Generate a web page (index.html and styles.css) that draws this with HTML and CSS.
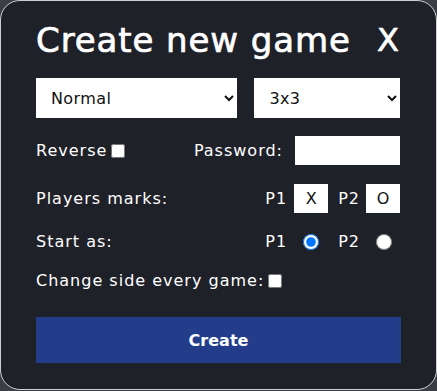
FILE: index.html
```html
<!DOCTYPE html>
<html lang="en">
<head>
	<meta charset="utf-8">
	<title>Create new game</title>
	<link rel="stylesheet" href="styles.css">
</head>
<body>
	<div class="modal">
		<div class="head">
			<h1>Create new game</h1>
			<span class="close">X</span>
		</div>
		<div class="row selects">
			<select class="mode">
				<option>Normal</option>
				<option>Reverse</option>
			</select>
			<select class="size">
				<option>3x3</option>
				<option>4x4</option>
				<option>5x5</option>
			</select>
		</div>
		<div class="row r2">
			<label class="rev">Reverse<input type="checkbox" class="chk"></label>
			<label class="pass">Password:<input type="text" class="pwd"></label>
		</div>
		<div class="row r3">
			<span>Players marks:</span>
			<div class="right">
				<span>P1</span><input type="text" class="mark" value="X" maxlength="1">
				<span>P2</span><input type="text" class="mark" value="O" maxlength="1">
			</div>
		</div>
		<div class="row r4">
			<span>Start as:</span>
			<div class="right">
				<span>P1</span><input type="radio" name="start" class="rad" checked>
				<span>P2</span><input type="radio" name="start" class="rad">
			</div>
		</div>
		<div class="row r5">
			<label class="rev">Change side every game:<input type="checkbox" class="chk"></label>
		</div>
		<button class="create">Create</button>
	</div>
</body>
</html>
```

FILE: styles.css
```css
*{ margin:0; padding:0; box-sizing:border-box; }
body{ background:#3b3e45; font-family:"DejaVu Sans","Noto Sans",sans-serif; color:#fff; }
.modal{ width:437px; height:390px; background:#1f2129; border:1px solid #cfcfcf; border-radius:20px; padding:17px 36px 0 35px; }

.head{ display:flex; justify-content:space-between; align-items:center; height:44px; }
.head h1{ font-size:34px; font-weight:400; letter-spacing:0.9px; -webkit-text-stroke:0.7px #fff; }
.close{ font-size:32px; font-weight:400; margin-right:1px; -webkit-text-stroke:0.7px #fff; }

.row{ display:flex; align-items:center; font-size:16px; letter-spacing:1px; }
.selects{ margin-top:16px; gap:17px; letter-spacing:0.4px; }
.selects select{ height:40px; border:none; border-radius:0; background:#fff; font-size:16px; font-family:inherit; letter-spacing:inherit; padding:0 8px 0 11px; color:#111; }
.selects .mode{ width:202px; }
.selects .size{ width:146px; }

.r2{ margin-top:18px; height:29px; }
.rev{ display:flex; align-items:center; }
.chk{ margin-left:4px; width:14px; height:14px; }
.pass{ display:flex; align-items:center; margin-left:auto; gap:12px; }
.pwd{ width:105px; height:29px; border:none; background:#fff; }

.r3, .r4{ justify-content:space-between; height:29px; }
.r3{ margin-top:19px; }
.r4{ margin-top:14px; }
.right{ display:flex; align-items:center; }
.mark{ width:34px; height:29px; border:none; background:#fff; text-align:center; font-size:16px; font-family:inherit; color:#111; margin:0 10px 0 7px; }
.mark:last-child{ margin-right:0; margin-left:6px; }
.rad{ width:16px; height:16px; margin:0 19px 0 16px; }
.rad:last-child{ margin-right:8px; }

.r5{ margin-top:10px; height:29px; }

.create{ display:block; margin-top:22px; width:365px; height:46px; border:none; background:#233d8b; color:#fff; font-size:16px; font-weight:700; font-family:inherit; }
```
